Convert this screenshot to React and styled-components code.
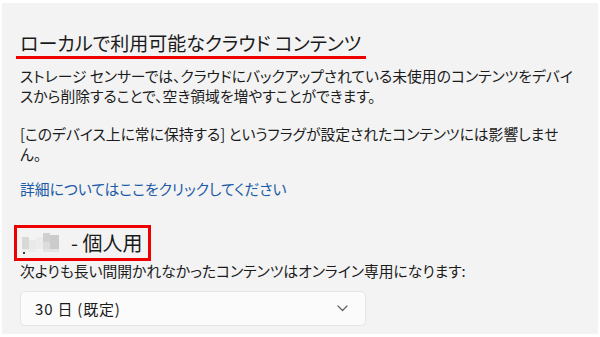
import React from 'react'
import styled, { createGlobalStyle } from 'styled-components'

const GlobalStyle = createGlobalStyle`
  html, body {
    margin: 0;
    padding: 0;
    background: #ffffff;
  }
  body {
    font-family: "Noto Sans CJK JP", "Noto Sans", sans-serif;
    font-feature-settings: "palt";
    color: #1b1b1b;
  }
`

const Page = styled.div`
  width: 600px;
  height: 337px;
  padding: 3px 2px;
  box-sizing: border-box;
  overflow: hidden;
`

const Panel = styled.section`
  height: 331px;
  background: #f3f3f3;
  padding: 27px 20px 0 18px;
  box-sizing: border-box;
  display: flex;
  flex-direction: column;
  align-items: flex-start;
`

const Title = styled.h2`
  margin: 0 0 0 -4px;
  padding: 0 5px 1px 4px;
  font-size: 19px;
  line-height: 25px;
  font-weight: 400;
  color: #1a1a1a;
  border-bottom: 3px solid #ee0000;
`

const Text = styled.p`
  margin: ${p => p.$top || 0}px 0 0;
  max-width: ${p => p.$width || 551}px;
  font-size: 14.8px;
  line-height: 20px;
  word-break: break-all;
`

const LinkText = styled.a`
  margin-top: 15px;
  font-size: 14.8px;
  line-height: 20px;
  color: #1a5aa6;
  text-decoration: none;
  cursor: pointer;
`

const Highlight = styled.div`
  margin: 26px 0 0 -6px;
  height: 36px;
  box-sizing: border-box;
  padding: 0 6px 0 5px;
  border: 3px solid #ee0000;
  display: flex;
  align-items: center;
  gap: 7px;
`

const SubTitle = styled.h3`
  margin: 0;
  font-size: 20px;
  line-height: 28px;
  font-weight: 400;
  color: #1a1a1a;
`

const Redacted = styled.svg`
  display: block;
  flex: none;
`

const Select = styled.div`
  margin-top: 10px;
  width: 346px;
  height: 35px;
  box-sizing: border-box;
  padding: 0 17px 0 14px;
  background: #fbfbfb;
  border: 1px solid #e5e5e5;
  border-radius: 5px;
  display: flex;
  align-items: center;
  justify-content: space-between;
  font-size: 15px;
  font-feature-settings: normal;
  letter-spacing: 0.8px;
  color: #1b1b1b;
`

const Chevron = () => (
  <svg width="11" height="7" viewBox="0 0 11 7" fill="none">
    <path d="M1 1l4.5 4.5L10 1" stroke="#606060" strokeWidth="1.2" strokeLinecap="round" strokeLinejoin="round" />
  </svg>
)

const Mosaic = () => (
  <Redacted width="42" height="24" viewBox="0 0 42 24">
    <rect x="0" y="6" width="7" height="12" fill="#d8d8d8" />
    <rect x="7" y="9" width="7" height="9" fill="#e9e9e9" />
    <rect x="14" y="6" width="7" height="12" fill="#ececec" />
    <rect x="21" y="2" width="7" height="9" fill="#d0d0d0" />
    <rect x="21" y="11" width="7" height="7" fill="#dcdcdc" />
    <rect x="28" y="4" width="9" height="14" fill="#cbcbcb" />
    <rect x="0" y="18" width="14" height="3" fill="#ededed" />
    <rect x="21" y="18" width="16" height="3" fill="#e4e4e4" />
    <rect x="1" y="21" width="2" height="2" fill="#3a3a3a" />
  </Redacted>
)

export default function App() {
  return (
    <Page>
      <GlobalStyle />
      <Panel>
        <Title>ローカルで利用可能なクラウド コンテンツ</Title>
        <Text $top={7} $width={560}>
          ストレージ センサーでは、クラウドにバックアップされている未使用のコンテンツをデバイ<br />
          スから削除することで、空き領域を増やすことができます。
        </Text>
        <Text $top={18}>
          [このデバイス上に常に保持する] というフラグが設定されたコンテンツには影響しません。
        </Text>
        <LinkText>詳細についてはここをクリックしてください</LinkText>
        <Highlight>
          <Mosaic />
          <SubTitle>- 個人用</SubTitle>
        </Highlight>
        <Text>次よりも長い間開かれなかったコンテンツはオンライン専用になります:</Text>
        <Select>
          <span>30 日 (既定)</span>
          <Chevron />
        </Select>
      </Panel>
    </Page>
  )
}
